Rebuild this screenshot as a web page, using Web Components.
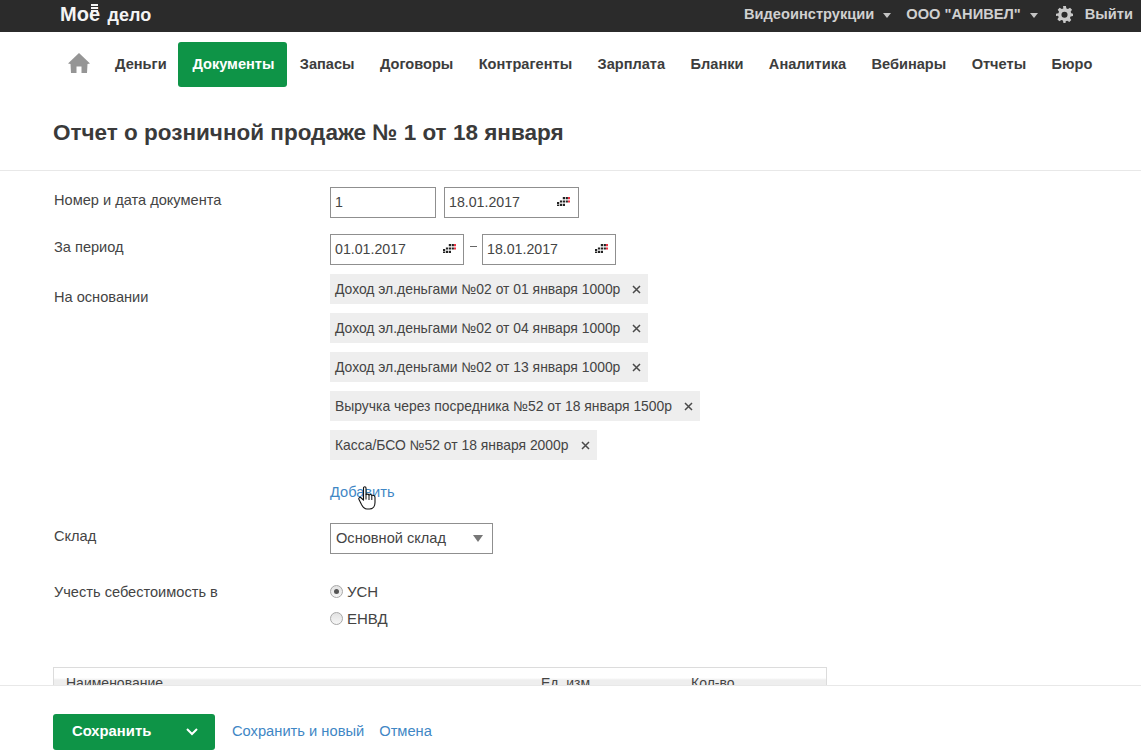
<!DOCTYPE html>
<html lang="ru">
<head>
<meta charset="utf-8">
<title>Отчет о розничной продаже</title>
<style>
  html, body { margin: 0; height: 752px; overflow: hidden; background: #fff; }
  body { font-family: "Liberation Sans", Arial, sans-serif; font-size: 14.6px; color: #444; position: relative; }
</style>
</head>
<body>
<app-topbar></app-topbar>
<app-nav></app-nav>
<page-title>Отчет о розничной продаже № 1 от 18 января</page-title>

<doc-form>
  <form-row label="Номер и дата документа" gap="16">
    <text-field value="1" width="106"></text-field>
    <date-field value="18.01.2017" width="135"></date-field>
  </form-row>

  <form-row label="За период" gap="9">
    <date-field value="01.01.2017" width="134"></date-field>
    <range-dash></range-dash>
    <date-field value="18.01.2017" width="134"></date-field>
  </form-row>

  <form-row label="На основании" gap="18" stack>
    <tag-chip>Доход эл.деньгами №02 от 01 января 1000р</tag-chip>
    <tag-chip>Доход эл.деньгами №02 от 04 января 1000р</tag-chip>
    <tag-chip>Доход эл.деньгами №02 от 13 января 1000р</tag-chip>
    <tag-chip>Выручка через посредника №52 от 18 января 1500р</tag-chip>
    <tag-chip>Касса/БСО №52 от 18 января 2000р</tag-chip>
    <add-link>Добавить</add-link>
  </form-row>

  <form-row label="Склад" gap="25">
    <select-field value="Основной склад"></select-field>
  </form-row>

  <form-row label="Учесть себестоимость в" gap="0" radios>
    <radio-option checked>УСН</radio-option>
    <radio-option>ЕНВД</radio-option>
  </form-row>
</doc-form>

<doc-table></doc-table>
<app-footer></app-footer>

<script>
class AppTopbar extends HTMLElement {
  constructor() {
    super();
    this.attachShadow({ mode: 'open' });
  }

  connectedCallback() {
    this.shadowRoot.innerHTML = `
      <style>
        :host {
          display: flex;
          align-items: center;
          justify-content: space-between;
          height: 32px;
          padding: 0 8px 0 60px;
          background: #2b2b2b;
          color: #d0d0d0;
          font-weight: bold;
          font-size: 14.650px;
        }
        .logo {
          color: #f4f4f4;
          font-size: 20px;
          font-weight: 700;
          line-height: 28px;
          margin-top: -4px;
          white-space: nowrap;
        }
        .logo small { font-size: 18px; margin-left: 2px; }
        .e { position: relative; }
        /* the logo draws the dots of its letter as three bars */
        .e::before {
          content: "";
          position: absolute;
          left: 2px;
          right: 2px;
          top: 1px;
          height: 8px;
          background: repeating-linear-gradient(#2b2b2b 0 .5px, #f4f4f4 .5px 2px, #2b2b2b 2px 3px);
        }
        .right { display: flex; align-items: center; margin-top: -4px; }
        .caret {
          width: 0;
          height: 0;
          margin: 3px 15px 0 9px;
          border: 4px solid transparent;
          border-top: 5px solid #c4c4c4;
          border-bottom: 0;
        }
        svg { display: block; margin: 0 12px 0 3px; }
      </style>
      <div class="logo">Мо<span class="e">ё</span> <small>дело</small></div>
      <div class="right">
        <span>Видеоинструкции</span><i class="caret"></i>
        <span>ООО "АНИВЕЛ"</span><i class="caret"></i>
        <svg width="17" height="17" viewBox="0 0 24 24" fill="#c8c8c8"><path fill-rule="evenodd" d="M10 0h4l.7 3.400 2.200.9L19.800 2.400l2.800 2.800-1.900 2.900.9 2.200L24 11v3l-3.400.7-.9 2.200 1.900 2.900-2.800 2.800-2.900-1.900-2.200.9L13.500 24h-3l-.7-3.400-2.200-.9-2.900 1.900-2.800-2.800 1.900-2.900-.9-2.200L0 14v-3l3.400-.7.9-2.200L2.400 5.200l2.800-2.800 2.900 1.900 2.200-.9zM12 8a4.300 4.300 0 1 0 0 8.600A4.300 4.300 0 0 0 12 8z"/></svg>
        <span>Выйти</span>
      </div>
    `;
  }
}

class AppNav extends HTMLElement {
  constructor() {
    super();
    this.attachShadow({ mode: 'open' });
  }

  connectedCallback() {
    const items = ['Деньги', 'Документы', 'Запасы', 'Договоры', 'Контрагенты', 'Зарплата', 'Бланки', 'Аналитика', 'Вебинары', 'Отчеты', 'Бюро'];
    this.shadowRoot.innerHTML = `
      <style>
        :host {
          display: flex;
          align-items: center;
          height: 45px;
          padding: 10px 0 0 68px;
          color: #3d3d3d;
          font-weight: bold;
          font-size: 14.6px;
        }
        svg { display: block; margin: -3px 12.400px 0 0; }
        a {
          display: flex;
          align-items: center;
          box-sizing: border-box;
          height: 45px;
          padding: 0 12.700px 2px;
          white-space: nowrap;
        }
        a.active {
          margin: 0 -.4px 0 -1.400px;
          padding: 0 13px 2px 14.500px;
          background: #0e9447;
          border-radius: 3px;
          color: #fff;
        }
      </style>
      <svg width="22" height="20" viewBox="0 0 22 20" fill="#959595"><path d="M11 0 22 10.500 19.500 11 19 20H13.500V13.500H8.500V20H3L2.500 11 0 10.500z"/></svg>
      ${items.map((item) => `<a class="${item === 'Документы' ? 'active' : ''}">${item}</a>`).join('')}
    `;
  }
}

class PageTitle extends HTMLElement {
  constructor() {
    super();
    this.attachShadow({ mode: 'open' });
    this.shadowRoot.innerHTML = `
      <style>
        :host {
          display: block;
          margin-top: 13px;
          padding: 0 53px;
          height: 70px;
          line-height: 66px;
          border-bottom: 1px solid #e8e8e8;
          color: #3a3a3a;
          font-size: 22.5px;
          font-weight: bold;
        }
      </style>
      <slot></slot>
    `;
  }
}

class DocForm extends HTMLElement {
  constructor() {
    super();
    this.attachShadow({ mode: 'open' });
    this.shadowRoot.innerHTML = `
      <style>
        :host { display: block; padding: 16px 0 0 54px; }
      </style>
      <slot></slot>
    `;
  }
}

class FormRow extends HTMLElement {
  constructor() {
    super();
    this.attachShadow({ mode: 'open' });
  }

  connectedCallback() {
    const stack = this.hasAttribute('stack');
    const radios = this.hasAttribute('radios');
    const direction = stack || radios ? 'column' : 'row';
    this.shadowRoot.innerHTML = `
      <style>
        :host {
          display: grid;
          grid-template-columns: 276px 1fr;
          margin-bottom: ${this.getAttribute('gap')}px;
        }
        .label { line-height: 26px; color: #444; padding-top: ${stack ? 10 : 0}px; }
        .controls {
          display: flex;
          flex-direction: ${direction};
          align-items: flex-start;
          gap: ${stack ? 9 : radios ? 7 : 8}px;
          padding-top: ${radios ? 2 : 0}px;
        }
      </style>
      <div class="label">${this.getAttribute('label')}</div>
      <div class="controls"><slot></slot></div>
    `;
  }
}

class TextField extends HTMLElement {
  constructor() {
    super();
    this.attachShadow({ mode: 'open' });
  }

  connectedCallback() {
    this.shadowRoot.innerHTML = `
      <style>
        :host {
          display: flex;
          align-items: center;
          box-sizing: border-box;
          width: ${this.getAttribute('width')}px;
          height: 31px;
          padding: 0 4px 2px;
          border: 1px solid #8f8f8f;
          color: #444;
          background: #fff;
          font-size: 14.200px;
        }
      </style>
      ${this.getAttribute('value')}
    `;
  }
}

class DateField extends HTMLElement {
  constructor() {
    super();
    this.attachShadow({ mode: 'open' });
  }

  connectedCallback() {
    const right = this.getAttribute('width') === '134' ? 7 : 8;
    this.shadowRoot.innerHTML = `
      <style>
        :host {
          display: flex;
          align-items: center;
          justify-content: space-between;
          box-sizing: border-box;
          width: ${this.getAttribute('width')}px;
          height: 31px;
          padding: 0 ${right}px 2px 4px;
          border: 1px solid #8f8f8f;
          color: #444;
          background: #fff;
          font-size: 14.200px;
        }
        svg { display: block; }
      </style>
      <span>${this.getAttribute('value')}</span>
      <svg width="13" height="9" viewBox="0 0 13 9">
        <path fill="#222" d="M5.800 0H8v2.200H5.800zM8.700 0h2.200v2.200H8.700zM2.900 3.400h2.200v2.200H2.900zM5.800 3.400H8v2.200H5.800zM8.700 3.400h2.200v2.200H8.700zM0 5h2.200v2H0zM2.900 6.800h2.200V9H2.900zM5.800 6.800H8V9H5.800zM0 7.400h2.200V9H0z"/>
        <path fill="#ee3344" d="M11 0h2v2.200h-2zM11 3.400h2v2.200h-2z"/>
      </svg>
    `;
  }
}

class RangeDash extends HTMLElement {
  constructor() {
    super();
    this.attachShadow({ mode: 'open' });
    this.shadowRoot.innerHTML = `
      <style>
        :host { display: block; width: 7px; margin: 12px -3px 0 -2px; height: 1px; background: #666; }
      </style>
    `;
  }
}

class TagChip extends HTMLElement {
  constructor() {
    super();
    this.attachShadow({ mode: 'open' });
    this.shadowRoot.innerHTML = `
      <style>
        :host {
          display: flex;
          align-items: center;
          height: 30px;
          padding: 0 7px 0 5px;
          background: #eeeeee;
          color: #444;
          font-size: 13.900px;
          white-space: nowrap;
        }
        svg { display: block; margin-left: 12px; }
      </style>
      <slot></slot>
      <svg width="9" height="9" viewBox="0 0 9 9" stroke="#4a4a4a" stroke-width="1.500"><path d="M1 1l7 7M8 1l-7 7"/></svg>
    `;
  }
}

class AddLink extends HTMLElement {
  constructor() {
    super();
    this.attachShadow({ mode: 'open' });
    this.shadowRoot.innerHTML = `
      <style>
        :host {
          display: block;
          position: relative;
          margin-top: 10px;
          line-height: 26px;
          color: #3f87c5;
        }
        svg { position: absolute; left: 28px; top: 7px; }
      </style>
      <slot></slot>
      <svg width="19" height="24" viewBox="0 0 19 24">
        <path fill="#fff" stroke="#111" stroke-width="1.100" stroke-linejoin="round" d="M5.500 2c0-1.600 2.500-1.600 2.500 0v6.500c1.500-.6 2.500-.3 3 .4 1.200-.6 2.300-.3 2.800.5 1.300-.5 3.200 0 3.200 2v5.100c0 3-1.500 6.500-5.500 6.500h-2.500c-3 0-4-2-5.500-4.500L1 13.500c-.8-1.600 1-2.800 2.300-1.500l2.200 2.200z"/>
        <path stroke="#111" stroke-width="1" d="M8 8.500v5M11 9v5M13.800 9.500v4.500"/>
      </svg>
    `;
  }
}

class SelectField extends HTMLElement {
  constructor() {
    super();
    this.attachShadow({ mode: 'open' });
  }

  connectedCallback() {
    this.shadowRoot.innerHTML = `
      <style>
        :host {
          display: flex;
          align-items: center;
          justify-content: space-between;
          box-sizing: border-box;
          width: 163px;
          height: 31px;
          padding: 0 9px 1px 5px;
          border: 1px solid #8f8f8f;
          color: #444;
          background: #fff;
        }
        i {
          width: 0;
          height: 0;
          border: 5.500px solid transparent;
          border-top: 7px solid #777;
          border-bottom: 0;
        }
      </style>
      <span>${this.getAttribute('value')}</span><i></i>
    `;
  }
}

class RadioOption extends HTMLElement {
  constructor() {
    super();
    this.attachShadow({ mode: 'open' });
  }

  connectedCallback() {
    const checked = this.hasAttribute('checked');
    this.shadowRoot.innerHTML = `
      <style>
        :host {
          display: flex;
          align-items: center;
          height: 20px;
          color: #444;
          font-size: 15px;
        }
        .dot {
          box-sizing: border-box;
          display: flex;
          align-items: center;
          justify-content: center;
          width: 13px;
          height: 13px;
          margin-right: 4px;
          border: 1px solid #a8a8a8;
          border-radius: 50%;
          background: linear-gradient(#e2e2e2, #f6f6f6);
        }
        .dot b { width: 5px; height: 5px; border-radius: 50%; background: #555; }
      </style>
      <span class="dot">${checked ? '<b></b>' : ''}</span><slot></slot>
    `;
  }
}

class DocTable extends HTMLElement {
  constructor() {
    super();
    this.attachShadow({ mode: 'open' });
    this.shadowRoot.innerHTML = `
      <style>
        :host {
          display: block;
          box-sizing: border-box;
          width: 774px;
          margin: 39px 0 0 53px;
          height: 40px;
          border: 1px solid #dcdcdc;
          color: #444;
          font-size: 14px;
          background: linear-gradient(#fff 10px, #eeeeee 12px);
        }
        .head { display: flex; padding: 7px 0 0 12px; line-height: 16px; }
        span:nth-child(1) { width: 475px; }
        span:nth-child(2) { width: 150px; }
      </style>
      <div class="head"><span>Наименование</span><span>Ед. изм.</span><span>Кол-во</span></div>
    `;
  }
}

class AppFooter extends HTMLElement {
  constructor() {
    super();
    this.attachShadow({ mode: 'open' });
    this.shadowRoot.innerHTML = `
      <style>
        :host {
          position: absolute;
          left: 0;
          right: 0;
          top: 685px;
          bottom: 0;
          display: flex;
          align-items: flex-start;
          gap: 15px;
          box-sizing: border-box;
          padding: 28px 0 0 53px;
          background: #fff;
          border-top: 1px solid #e8e8e8;
          color: #3f87c5;
          font-size: 14.700px;
        }
        .save {
          display: flex;
          align-items: center;
          justify-content: space-between;
          box-sizing: border-box;
          width: 162px;
          height: 36px;
          padding: 0 17px 2px 19px;
          margin-right: 2px;
          background: #0e9447;
          border-radius: 3px;
          color: #fff;
          font-size: 14.800px;
          font-weight: bold;
        }
        svg { display: block; margin-top: 2px; }
        a { line-height: 34px; }
      </style>
      <div class="save">Сохранить
        <svg width="12" height="8" viewBox="0 0 12 8" fill="none" stroke="#fff" stroke-width="2"><path d="M1 1l5 5 5-5"/></svg>
      </div>
      <a>Сохранить и новый</a>
      <a>Отмена</a>
    `;
  }
}

customElements.define('app-topbar', AppTopbar);
customElements.define('app-nav', AppNav);
customElements.define('page-title', PageTitle);
customElements.define('doc-form', DocForm);
customElements.define('form-row', FormRow);
customElements.define('text-field', TextField);
customElements.define('date-field', DateField);
customElements.define('range-dash', RangeDash);
customElements.define('tag-chip', TagChip);
customElements.define('add-link', AddLink);
customElements.define('select-field', SelectField);
customElements.define('radio-option', RadioOption);
customElements.define('doc-table', DocTable);
customElements.define('app-footer', AppFooter);
</script>
</body>
</html>
